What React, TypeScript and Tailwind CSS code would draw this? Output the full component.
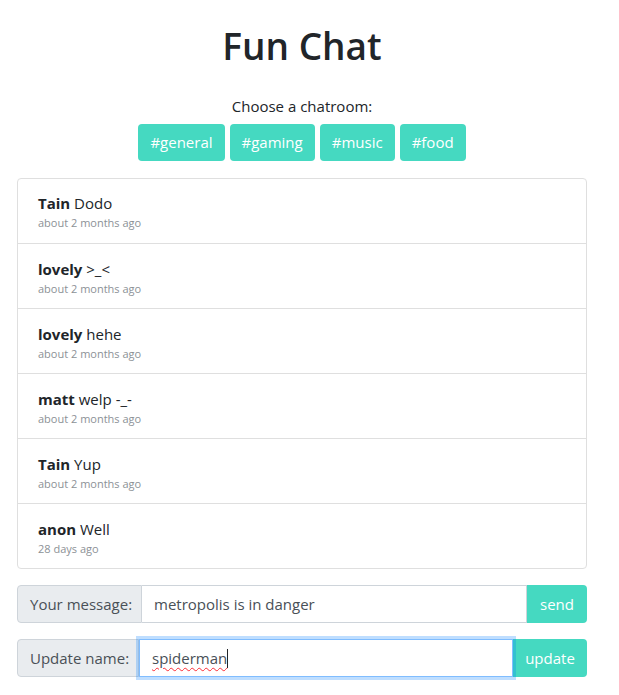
const rooms = ['#general', '#gaming', '#music', '#food'];

const messages = [
  { name: 'Tain', text: 'Dodo', time: 'about 2 months ago' },
  { name: 'lovely', text: '>_<', time: 'about 2 months ago' },
  { name: 'lovely', text: 'hehe', time: 'about 2 months ago' },
  { name: 'matt', text: 'welp -_-', time: 'about 2 months ago' },
  { name: 'Tain', text: 'Yup', time: 'about 2 months ago' },
  { name: 'anon', text: 'Well', time: '28 days ago' },
];

export default function App() {
  return (
    <div
      className="bg-white pb-4 text-[#212529]"
      style={{ fontFamily: '"Open Sans", sans-serif' }}
    >
      <div className="ml-[17px] w-[570px] pt-[22px]">
        <h1 className="text-center text-[37px] font-semibold leading-[48px]">Fun Chat</h1>

        <p className="mt-[24px] text-center text-[15px] leading-6">Choose a chatroom:</p>
        <div className="mt-[6px] flex justify-center gap-[5px]">
          {rooms.map((r) => (
            <button
              key={r}
              className="h-[37px] rounded-[4px] bg-[#45d9c1] px-3 text-[15px] text-white"
            >
              {r}
            </button>
          ))}
        </div>

        <ul className="mt-[17px] rounded-[4px] border border-[#dfdfdf]">
          {messages.map((m, i) => (
            <li
              key={i}
              className={
                'px-5 ' +
                (i > 0 ? 'h-[65px] border-t border-[#dfdfdf] pt-[13px]' : 'h-[64px] pt-[12px]')
              }
            >
              <div className="text-[15px] leading-6">
                <span className="font-bold">{m.name}</span> {m.text}
              </div>
              <div className="text-[11px] leading-[16px] text-[#8c9196]">{m.time}</div>
            </li>
          ))}
        </ul>

        <div className="mt-[16px] flex h-[38px]">
          <span className="flex w-[125px] items-center whitespace-nowrap rounded-l-[4px] border border-[#ced4da] bg-[#e9ecef] px-3 text-[15px] text-[#495057]">
            Your message:
          </span>
          <input
            readOnly
            value="metropolis is in danger"
            className="min-w-0 flex-1 border border-l-0 border-[#ced4da] px-3 text-[15px] text-[#495057] outline-none"
          />
          <button className="w-[60px] rounded-r-[4px] bg-[#45d9c1] text-[15px] text-white">
            send
          </button>
        </div>

        <div className="mt-[16px] flex h-[38px]">
          <span className="flex w-[122px] items-center whitespace-nowrap rounded-l-[4px] border border-[#ced4da] bg-[#e9ecef] px-3 text-[15px] text-[#495057]">
            Update name:
          </span>
          <div className="relative z-10 flex min-w-0 flex-1 items-center border border-[#80bdff] px-3 text-[15px] text-[#495057] shadow-[0_0_0_3px_rgba(0,123,255,0.25)]">
            <span className="underline decoration-red-500 decoration-wavy decoration-1 underline-offset-[3px]">
              spiderman
            </span>
            <span className="h-[19px] w-px bg-[#212529]" />
          </div>
          <button className="w-[74px] rounded-r-[4px] bg-[#45d9c1] text-[15px] text-white">
            update
          </button>
        </div>
      </div>
    </div>
  );
}
